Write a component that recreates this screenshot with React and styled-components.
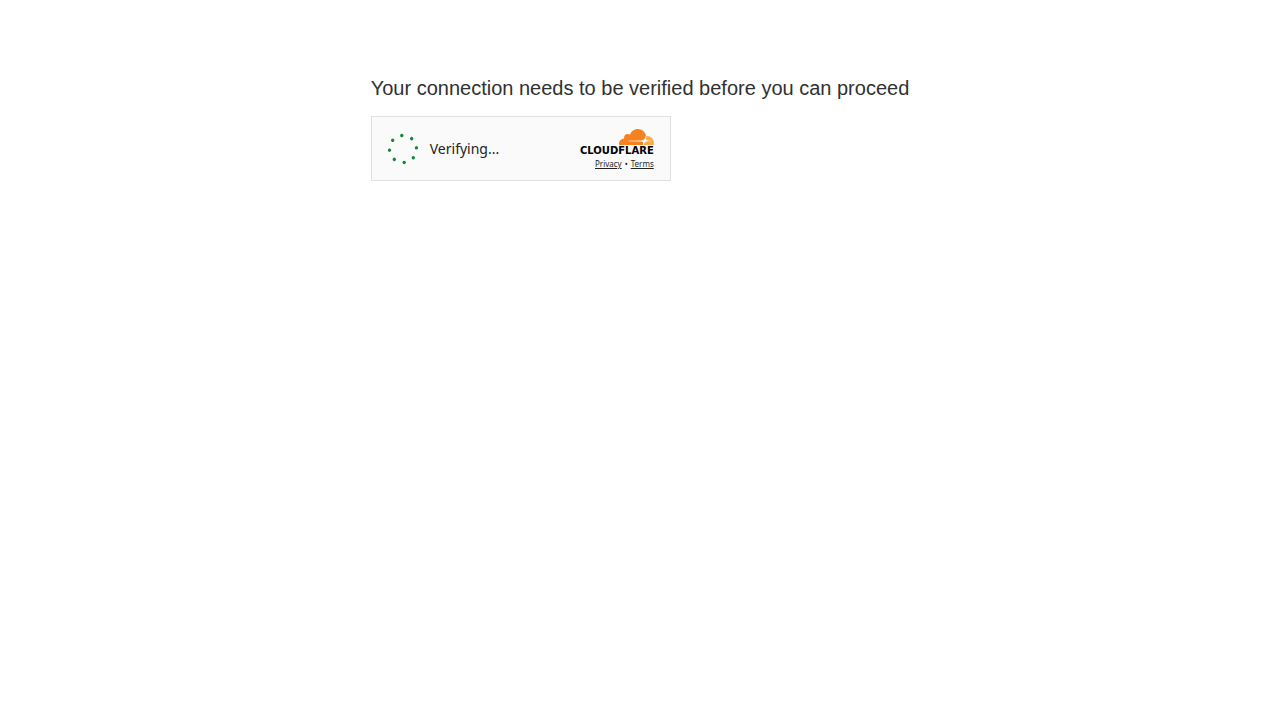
import React from 'react';
import styled, { createGlobalStyle } from "styled-components";

const GlobalStyle = createGlobalStyle`
    body {
        margin: 0;
        background: #fff;
        color: #313131;
        font-family: "Liberation Sans", Arial, sans-serif;
    }
`;

const S = {
    Page : styled.main`
        display: flex;
        justify-content: center;
        padding: 76px 16px 16px;
    `,
    Content : styled.div`
        display: flex;
        flex-direction: column;
        gap: 16px;
    `,
    Title : styled.h1`
        margin: 0;
        font-size: 20px;
        font-weight: 400;
        line-height: 24px;
    `,
    Widget : styled.section`
        box-sizing: border-box;
        display: flex;
        align-items: center;
        justify-content: space-between;
        width: 300px;
        max-width: 100%;
        padding: 11px 16px 10px;
        border: 1px solid #e0e0e0;
        background: #fafafa;
        color: #232323;
        font-family: "Noto Sans", sans-serif;
    `,
    Status : styled.div`
        display: flex;
        align-items: center;
        gap: 12px;
        font-size: 14px;
        line-height: 20px;
    `,
    Spinner : styled.svg`
        display: block;
        width: 30px;
        height: 32px;
        overflow: visible;
        fill: #14883a;
    `,
    Brand : styled.div`
        display: flex;
        flex-direction: column;
        align-items: flex-end;
        padding-top: 1px;
    `,
    Cloud : styled.svg`
        display: block;
        width: 35px;
        height: 16px;
    `,
    Wordmark : styled.span`
        color: #000;
        font-family: "DejaVu Sans", sans-serif;
        font-size: 10px;
        font-weight: 700;
        line-height: 12px;
    `,
    Links : styled.div`
        display: flex;
        gap: 3px;
        font-size: 8px;
        line-height: 13px;
    `,
    Link : styled.a`
        color: #232323;
        text-decoration: underline;
    `
}

const DOTS = [0, 45, 90, 135, 180, 225, 270, 315];

function Spinner() {
    return (
        <S.Spinner viewBox="0 0 30 32" aria-hidden="true">
            <g transform="rotate(-5 15 16)">
                {DOTS.map((angle) => (
                    <circle key={angle} cx="15" cy="2.5" r="1.7" transform={`rotate(${angle} 15 16)`} />
                ))}
            </g>
        </S.Spinner>
    );
}

function Cloud() {
    return (
        <S.Cloud viewBox="0 6.5 24 11" aria-hidden="true">
            <path fill="#f6821f" d="M16.5088 16.8447c.1475-.5068.0908-.9707-.1553-1.3154-.2246-.3164-.6045-.499-1.0615-.5205l-8.6592-.1123a.1559.1559 0 0 1-.1333-.0713c-.0283-.042-.0351-.0986-.021-.1553.0278-.084.1123-.1484.2036-.1562l8.7359-.1123c1.0351-.0489 2.1601-.8868 2.5537-1.9136l.499-1.3013c.0215-.0561.0293-.1128.0147-.168-.5625-2.5463-2.835-4.4453-5.5499-4.4453-2.5039 0-4.6284 1.6177-5.3876 3.8614-.4927-.3658-1.1187-.5625-1.794-.499-1.2026.119-2.1665 1.083-2.2861 2.2856-.0283.31-.0069.6128.0635.894C1.5683 13.171 0 14.7754 0 16.752c0 .1748.0142.3515.0352.5273.0141.083.0844.1475.1689.1475h15.9814c.0909 0 .1758-.0645.2032-.1553l.12-.4268z" />
            <path fill="#fbad41" d="M19.2656 11.2773c-.0781 0-.1611 0-.2383.0112-.0566 0-.1054.0415-.127.0976l-.3378 1.1744c-.1475.5068-.0918.9707.1543 1.3164.2256.3164.6055.498 1.0625.5195l1.8437.1133c.0557 0 .1055.0263.1329.0703.0283.043.0351.1074.0214.1562-.0283.084-.1132.1485-.204.1553l-1.921.1123c-1.041.0488-2.1582.8867-2.5527 1.914l-.1406.3585c-.0283.0713.0215.1416.0986.1416h6.5977c.0771 0 .1474-.0489.169-.126.1122-.4082.1757-.837.1757-1.2803 0-2.6025-2.125-4.727-4.7344-4.727" />
        </S.Cloud>
    );
}

class App extends React.Component {
    render () {
        return (
            <S.Page>
                <GlobalStyle />
                <S.Content>
                    <S.Title>Your connection needs to be verified before you can proceed</S.Title>
                    <S.Widget>
                        <S.Status role="status">
                            <Spinner />
                            <span>Verifying...</span>
                        </S.Status>
                        <S.Brand>
                            <Cloud />
                            <S.Wordmark>CLOUDFLARE</S.Wordmark>
                            <S.Links>
                                <S.Link href="#privacy">Privacy</S.Link>
                                <span>•</span>
                                <S.Link href="#terms">Terms</S.Link>
                            </S.Links>
                        </S.Brand>
                    </S.Widget>
                </S.Content>
            </S.Page>
        );
    }
}

export default App;
